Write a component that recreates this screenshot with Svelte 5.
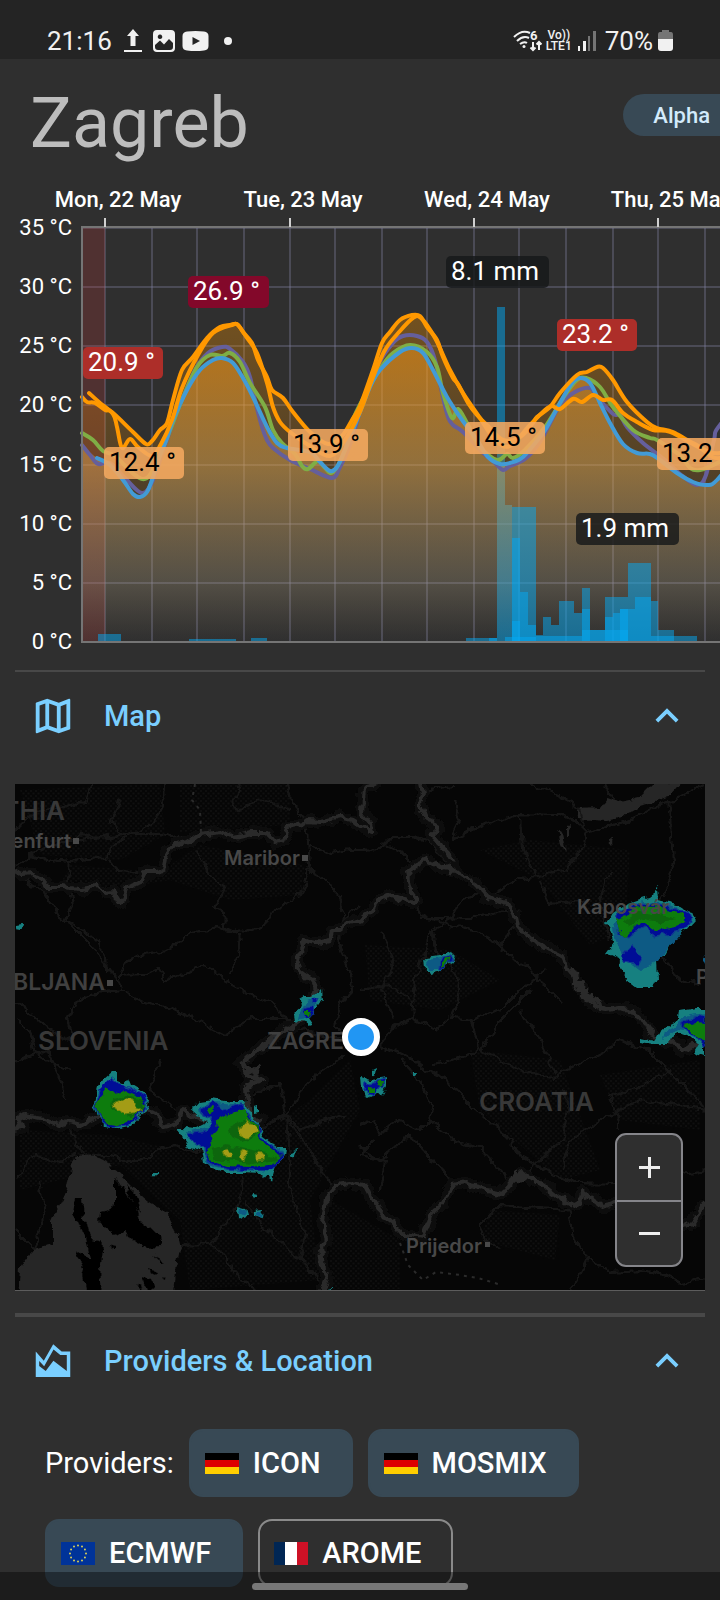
<script>
  let mapOpen = true;
  let providersOpen = true;

  let providers = [
    { name: 'ICON', flag: 'de', active: true },
    { name: 'MOSMIX', flag: 'de', active: true },
    { name: 'ECMWF', flag: 'eu', active: true },
    { name: 'AROME', flag: 'fr', active: false }
  ];

  const temps = [35, 30, 25, 20, 15, 10, 5, 0];
  const tempY = (t) => Math.round(642 - (t * 414) / 35);

  const days = [
    { x: 105, label: 'Mon, 22 May' },
    { x: 290, label: 'Tue, 23 May' },
    { x: 474, label: 'Wed, 24 May' },
    { x: 658, label: 'Thu, 25 May' }
  ];
  const gridX = [105, 152, 197, 244, 290, 335, 382, 427, 474, 519, 566, 613, 658, 705, 751];

  const upper = [[82,397],[87,402],[95,403],[105,410],[112,412],[133,432],[146,444],[152,441],[160,430],[167,423],[173,400],[182,370],[193,357],[207,338],[220,327],[230,325],[237,324],[243,332],[252,343],[258,360],[267,377],[272,390],[283,398],[293,412],[310,432],[328,444],[342,436],[352,420],[360,406],[373,370],[382,343],[390,332],[400,320],[412,315],[420,316],[427,327],[437,340],[443,357],[453,378],[458,384],[468,403],[477,415],[487,425],[503,440],[520,437],[533,423],[537,417],[550,407],[560,393],[577,375],[587,372],[597,367],[603,368],[613,380],[627,402],[647,422],[657,428],[673,432],[693,443],[720,453],[760,430]];
  const second = [[89,393],[100,403],[113,414],[117,427],[122,448],[130,439],[138,447],[152,456],[161,444],[172,420],[182,388],[198,355],[213,333],[232,325],[238,325],[247,338],[257,353],[267,383],[273,407],[280,422],[290,432],[310,446],[330,456],[345,440],[360,412],[372,380],[385,350],[400,331],[413,318],[421,318],[435,338],[450,370],[463,393],[480,418],[495,440],[510,446],[530,425],[545,410],[552,406],[560,409],[573,399],[582,402],[593,395],[603,400],[612,400],[623,413],[637,422],[653,430],[670,432],[700,448],[720,458],[760,440]];
  const blue = [[97,458],[110,465],[123,480],[133,494],[140,497],[147,492],[153,477],[160,455],[167,438],[173,420],[187,390],[200,370],[213,360],[222,358],[233,363],[243,378],[253,397],[267,427],[277,443],[287,448],[310,452],[320,462],[330,471],[337,467],[345,450],[355,425],[370,387],[380,370],[400,352],[412,348],[423,353],[433,370],[447,397],[460,417],[477,440],[488,457],[500,464],[510,463],[523,457],[540,437],[547,427],[560,403],[572,383],[580,378],[590,383],[600,403],[610,423],[623,444],[637,453],[650,454],[660,460],[677,473],[693,482],[707,485],[717,480],[740,450],[760,420]];
  const green = [[82,433],[93,440],[103,451],[115,456],[135,475],[147,478],[158,460],[167,438],[182,400],[197,367],[210,355],[222,356],[230,353],[240,362],[250,383],[265,407],[273,430],[282,443],[295,454],[302,466],[308,469],[318,461],[325,468],[333,472],[345,450],[352,422],[365,395],[382,366],[393,353],[410,345],[427,352],[437,367],[443,393],[452,418],[458,409],[467,423],[480,447],[497,460],[507,454],[513,458],[525,450],[545,427],[565,395],[577,380],[586,378],[600,387],[613,407],[633,430],[650,438],[657,440],[680,455],[700,470],[760,440]];
  const purple = [[82,445],[90,455],[98,464],[110,463],[125,478],[142,493],[153,480],[165,445],[180,405],[195,370],[208,353],[222,347],[230,349],[243,362],[250,377],[255,400],[262,427],[267,440],[273,448],[290,460],[310,469],[332,478],[340,467],[350,445],[362,405],[378,365],[393,343],[403,336],[417,336],[427,342],[435,360],[442,393],[448,417],[453,425],[463,432],[480,450],[495,463],[503,470],[510,466],[525,459],[540,442],[560,405],[575,392],[590,388],[597,397],[613,414],[620,415],[627,427],[643,443],[665,460],[680,474],[697,485],[706,475],[714,440],[720,425],[760,380]];

  // x, width, top
  const tallBars = [[497,8,307],[505,7,505]];
  const bars = [
    [98,23,634],[189,47,639],[251,16,638],[466,31,638],[489,8,638],
    [512,24,507],[512,8,538],[520,8,592],[528,8,625],[512,8,621],[505,31,637],
    [536,7,635],[543,8,617],[551,8,625],[559,15,601],[574,8,613],[582,8,588],
    [536,46,636],[582,8,609],[590,15,630],
    [605,23,597],[628,23,563],[651,7,601],[658,16,630],[674,23,636],
    [605,8,617],[613,7,613],[620,15,609],[635,16,597],[620,8,609],
    [582,46,630],[651,23,636]
  ];

  const labels = [
    { x: 188, y: 276, w: 81, text: '26.9 °', kind: 'hot' },
    { x: 83, y: 347, w: 80, text: '20.9 °', kind: 'warm' },
    { x: 557, y: 319, w: 80, text: '23.2 °', kind: 'warm' },
    { x: 104, y: 447, w: 80, text: '12.4 °', kind: 'mild' },
    { x: 288, y: 429, w: 80, text: '13.9 °', kind: 'mild' },
    { x: 465, y: 422, w: 80, text: '14.5 °', kind: 'mild' },
    { x: 657, y: 438, w: 80, text: '13.2 °', kind: 'mild' },
    { x: 446, y: 256, w: 103, text: '8.1 mm', kind: 'rain' },
    { x: 576, y: 513, w: 103, text: '1.9 mm', kind: 'rain' }
  ];

  function smooth(p) {
    let d = `M${p[0][0]} ${p[0][1]}`;
    for (let i = 0; i < p.length - 1; i++) {
      const a = p[i - 1] || p[i];
      const b = p[i];
      const c = p[i + 1];
      const e = p[i + 2] || c;
      d += `C${b[0] + (c[0] - a[0]) / 6} ${b[1] + (c[1] - a[1]) / 6} ${c[0] - (e[0] - b[0]) / 6} ${c[1] - (e[1] - b[1]) / 6} ${c[0]} ${c[1]}`;
    }
    return d;
  }

  function area(p) {
    return `${smooth(p)}V642H${p[0][0]}Z`;
  }

  const borders = [
    'M15 870L23 875L32 874L40 877L47 887L62 887L80 889L97 886L105 893L114 892L120 903L124 898L127 888L140 882L145 872L155 872L163 869L166 855L175 844L190 842L200 835L220 832L233 837L252 833L266 833L274 842L284 840L288 828L303 824L307 821L320 822L340 817L352 820L362 827L372 832L370 823L362 813L364 787L380 782',
    'M420 783L422 793L419 803L425 818L438 824L438 830L432 835L447 852L455 870L477 885L487 897L507 903L514 913L517 925L527 937L547 948L562 955L566 968L573 977L583 992L590 1002L607 1010L620 1008L633 1012L643 1020L650 1033L657 1037L670 1043L675 1042L682 1052L692 1045L706 1046',
    'M455 870L444 867L440 868L434 864L427 860L418 864L407 872L409 887L417 898L410 903L400 899L388 895L375 902L373 910L360 920L348 924L340 930L332 930L330 940L322 943L305 940L300 952L296 960L300 972L312 980L317 988L313 1000L300 1020L267 1043L240 1062L248 1076L263 1081L245 1088L247 1102L250 1115L260 1120L246 1125L213 1122L195 1118L182 1110L177 1123L163 1127L158 1115L147 1110L120 1116L97 1117L80 1125L67 1121L60 1125L43 1118L25 1115L18 1119L22 1128L15 1130',
    'M322 1292L328 1278L323 1270L321 1247L328 1240L323 1223L326 1197L337 1185L350 1183L365 1185L373 1200L385 1217L393 1222L403 1235L423 1238L432 1213L443 1203L452 1185L467 1183L487 1190L503 1193L512 1183L523 1173L532 1180L543 1185L560 1198L573 1205L580 1202L582 1192L593 1200L603 1207L620 1202L645 1220L670 1230L683 1227L693 1222L706 1203'
  ];
  const jags = [
    'M573 977L572 968L577 978L574 984L582 984L578 990L587 990L584 997L592 995L590 1003L598 999L600 1009L607 1010M510 1183L515 1173L520 1181L525 1176L533 1178L536 1184L543 1183M425 858L430 864L436 861L441 868L447 865L452 872M240 1062L252 1068L247 1075L258 1068L255 1080L263 1081'
  ];
  const roads = [
    'M15 874L45 895L60 916L72 926L92 946L106 965L115 977L122 988',
    'M66 920L84 931L98 942L107 955L108 972',
    'M117 978L128 960L145 954L168 950L190 933L218 928L240 932L262 928L275 910L300 896L310 865L306 820L293 805L288 784',
    'M117 975L145 974L160 968L165 981L180 974L205 965L230 982L244 991L275 1005L280 1014L293 1021',
    'M122 990L140 1001L165 1006L190 1016L225 1036L250 1018L285 1018L300 1030L345 1040',
    'M122 990L90 994L75 1003L67 1018L73 1040',
    'M195 850L215 880L225 886L214 908L225 912L224 927L240 935L238 955L230 975',
    'M164 784L163 805L156 820L135 833L110 836L80 840L62 842L30 855L15 865',
    'M15 830L35 812L62 807L85 802L92 784M62 842L80 835L110 838L130 834L160 834L185 838',
    'M28 855L50 860L70 862L105 858L115 845L130 836',
    'M70 862L68 880L73 905L65 920M108 858L118 870L150 872',
    'M310 868L325 882L340 895L343 915L339 940L350 975L352 990L341 1003L335 1025L350 1040L378 1046',
    'M342 920L360 905M310 845L330 853L352 850L362 850L380 849L392 838L410 838L430 842L440 855L455 875',
    'M387 845L405 855L415 865M455 800L460 820L450 840L482 825L512 815L560 816L575 820L587 831L600 828L632 820L660 804L680 798L703 785',
    'M587 831L578 855L566 870L545 875L520 878L500 890L487 896',
    'M455 786L420 790M520 815L522 850L535 875M520 780L560 795L580 810L585 830',
    'M668 800L672 835L674 862L667 890L655 910M602 784L616 800',
    'M489 894L465 897L455 910L450 920L432 930L415 980L412 1018L395 1025L380 1045',
    'M420 918L440 918L470 919L500 912L515 915M416 900L420 915L450 925L475 930L500 945L545 985L560 1000',
    'M432 930L435 950L455 970L460 990L452 1018L475 1020L500 1010L520 990L545 970',
    'M412 1018L435 1030L450 1018M380 1046L397 1052L412 1058L425 1070L445 1078L460 1095L475 1110L500 1130L522 1157L550 1172L572 1183L620 1184L706 1170',
    'M400 1058L415 1075L425 1090L433 1110L430 1120L455 1142L480 1148L496 1165L505 1180',
    'M360 1125L372 1120L380 1135L400 1120L420 1130L430 1120M375 1140L360 1155L385 1160L380 1190',
    'M470 1018L480 1050L520 1070L555 1078L575 1065L600 1055L620 1040L650 1052L668 1070L690 1092L706 1110',
    'M433 1065L470 1055L480 1045M520 1010L540 1040L555 1075M668 1070L640 1087L610 1095L620 1130',
    'M520 1175L540 1160L562 1140L568 1110L565 1090M562 1170L570 1140L600 1120L640 1100L706 1110',
    'M568 1208L575 1240L588 1258L580 1275L570 1290M588 1258L610 1272L640 1270L665 1275L680 1283L706 1278',
    'M360 1148L380 1160L410 1135L455 1185M568 1210L500 1205L480 1225L485 1240L500 1250',
    'M70 1125L75 1145L90 1155L105 1155L125 1160L145 1160L155 1150L175 1145L210 1155',
    'M15 1180L35 1155L60 1163L75 1155M15 1060L32 1055L50 1052L60 1080L65 1100',
    'M242 1175L240 1200L225 1225L210 1244L225 1255L240 1280L255 1290M245 1200L265 1230L300 1258L320 1280',
    'M180 1245L210 1244M345 1055L310 1080L287 1115L255 1130M287 1115L300 1130L325 1120L345 1115',
    'M240 1100L260 1090L280 1085L285 1115L320 1165L330 1185M287 1115L290 1160L290 1190L305 1235L300 1258',
    'M15 1230L35 1250L45 1210L40 1180M70 1070L35 1055L30 1030L15 1020M160 1060L150 1090L175 1110',
    'M540 880L550 905L590 900M520 910L500 950M380 930L395 960L380 990L395 1018M360 990L390 985L410 1000',
    'M530 990L500 1020L480 1050M610 870L600 900L610 940M650 940L680 980L700 985',
    'M120 800L110 820L120 835M240 784L233 800L238 810L260 800L290 810M15 1000L50 1030L70 1040'
  ];

  // Polygons carry a colour class, drawn from light rain to heavy
  const radar = [
    ['teal', 'M658 888L659 900L672 903L684 907L691 914L694 922L687 930L675 936L665 955L656 962L657 977L654 987L637 987L628 980L619 968L620 960L606 953L614 942L612 932L606 923L614 912L626 904L640 899L647 897Z'],
    ['mid', 'M625 908L645 901L672 905L688 914L691 922L680 933L670 946L658 962L640 971L625 960L616 942L612 924Z'],
    ['navy', 'M617 914L634 903L655 904L672 908L688 912L691 920L685 930L675 932L656 937L645 928L628 936L619 934L616 924Z'],
    ['navy', 'M632 944L636 953L641 957L637 964L625 962L621 956Z'],
    ['green', 'M615 919L627 916L634 905L655 906L673 912L686 914L686 922L675 927L655 931L645 924L634 927L625 936L618 931Z'],
    ['dark', 'M624 921L640 911L660 914L677 919L660 922L643 919L628 928Z'],
    ['teal', 'M706 1008L697 1008L679 1011L678 1020L663 1028L657 1040L640 1037L640 1042L654 1044L668 1044L677 1032L690 1037L699 1045L694 1053L706 1056Z'],
    ['mid', 'M706 1012L690 1014L680 1022L666 1031L664 1040L677 1028L690 1030L706 1046Z'],
    ['navy', 'M706 1014L693 1016L682 1024L690 1034L700 1039L706 1047Z'],
    ['green', 'M706 1023L695 1022L685 1025L694 1035L706 1040Z'],
    ['mid', 'M706 953L703 957L706 964Z'],
    ['teal', 'M424 957L440 955L451 951L455 955L453 963L440 970L430 973L425 968Z'],
    ['mid', 'M427 959L443 957L452 954L453 961L438 969L428 969Z'],
    ['navy', 'M439 961L451 955L452 961L443 968L438 968Z'],
    ['green', 'M442 962L450 957L448 964L441 967Z'],
    ['teal', 'M321 989L322 1000L315 1010L309 1018L313 1024L311 1028L304 1022L295 1020L294 1012L301 1006L300 999L305 996L314 996Z'],
    ['mid', 'M318 996L317 1005L309 1012L306 1018L299 1019L301 1010L307 1000Z'],
    ['navy', 'M314 997L319 999L317 1004L312 1003ZM304 1009L312 1008L314 1014L306 1018Z'],
    ['green', 'M306 1011L311 1011L310 1015L306 1015Z'],
    ['teal', 'M16 925L22 924L24 927L20 930L15 929Z'],
    ['teal', 'M112 1072L117 1072L117 1081L122 1083L127 1077L130 1084L143 1092L149 1101L146 1113L137 1119L131 1127L116 1130L105 1128L98 1115L93 1103L97 1087L103 1080Z'],
    ['navy', 'M111 1078L117 1083L129 1087L143 1094L147 1103L144 1112L135 1119L128 1126L110 1129L102 1122L95 1104L99 1090Z'],
    ['green', 'M107 1088L113 1094L127 1090L140 1096L146 1104L141 1112L132 1119L120 1127L108 1126L100 1115L96 1104L101 1095Z'],
    ['dark', 'M113 1100L128 1095L143 1099L144 1109L132 1117L120 1112L112 1108Z'],
    ['yellow', 'M114 1104L123 1101L127 1098L133 1099L135 1106L142 1109L141 1113L133 1113L126 1114L116 1110Z'],
    ['teal', 'M175 1127L183 1127L195 1128L207 1122L195 1117L194 1108L200 1101L213 1099L230 1102L244 1102L250 1112L258 1125L264 1137L278 1147L285 1147L284 1157L274 1166L270 1179L262 1174L244 1173L225 1173L212 1169L205 1162L203 1151L189 1147L182 1135Z'],
    ['mid', 'M198 1108L208 1102L230 1105L243 1105L256 1125L262 1139L280 1149L282 1157L268 1171L226 1170L208 1165L205 1150L193 1144L186 1132L208 1127L212 1120L199 1116Z'],
    ['navy', 'M200 1107L213 1102L222 1110L243 1105L250 1118L258 1127L261 1138L276 1149L283 1158L268 1172L226 1169L209 1163L206 1149L190 1141L187 1134L208 1131L213 1118L201 1116Z'],
    ['green', 'M205 1109L211 1107L215 1111L208 1114ZM216 1121L232 1112L245 1108L248 1118L256 1125L260 1140L272 1149L281 1157L270 1165L250 1167L226 1166L212 1161L207 1153L211 1146L210 1137L217 1130Z'],
    ['dark', 'M228 1130L246 1120L257 1128L256 1137L240 1141L230 1137ZM211 1149L226 1145L246 1149L275 1155L278 1159L250 1163L216 1159Z'],
    ['yellow', 'M240 1130L247 1120L252 1126L257 1131L250 1137L241 1137ZM222 1152L228 1149L233 1152L231 1157L224 1157ZM241 1151L247 1152L244 1160L240 1157ZM255 1154L263 1155L267 1159L257 1160Z'],
    ['teal', 'M254 1108L259 1107L259 1112L254 1113ZM291 1151L297 1149L296 1156L291 1157ZM153 1173L158 1173L158 1176L153 1175ZM254 1192L259 1193L257 1196L253 1195ZM238 1206L245 1208L247 1215L244 1219L239 1217ZM254 1211L261 1210L260 1217L254 1215Z'],
    ['mid', 'M241 1208L245 1210L244 1216L240 1214ZM256 1212L260 1212L259 1216L256 1215Z'],
    ['teal', 'M362 1077L371 1080L386 1078L387 1085L382 1095L376 1092L366 1097L363 1089ZM372 1070L376 1068L375 1073L372 1075ZM414 1072L418 1072L417 1076L414 1076ZM327 1288L332 1287L332 1291L327 1291Z'],
    ['navy', 'M366 1084L384 1079L385 1087L376 1089L371 1095L365 1091Z'],
    ['green', 'M368 1086L373 1087L373 1092L368 1092ZM379 1081L384 1081L383 1087L377 1086Z']
  ];

  const hills = [
    'M20 790L160 784L165 835L120 860L40 855Z',
    'M70 865L160 872L200 845L305 865L300 895L230 900L170 880L110 890L60 885Z',
    'M180 784L290 784L290 825L180 832Z',
    'M480 850L530 840L630 850L625 930L590 945L540 880Z',
    'M20 1130L110 1135L220 1160L310 1100L350 1060L360 1110L310 1200L320 1280L190 1290L180 1220L120 1165L20 1190Z',
    'M365 945L450 950L500 980L440 1010L370 1000Z',
    'M470 1050L560 1060L600 1170L560 1180L480 1110Z',
    'M330 1200L400 1240L400 1289L330 1289Z',
    'M600 1075L700 1060L700 1130L620 1120Z',
    'M490 1210L560 1215L555 1260L480 1240Z'
  ];

  const stars = Array.from({ length: 12 }, (_, i) => {
    const a = (i * Math.PI) / 6;
    return [17 + 8 * Math.sin(a), 11.5 - 8 * Math.cos(a)];
  });

  function toggle(provider) {
    provider.active = !provider.active;
    providers = providers;
  }
</script>

<div class="status">
  <span class="clock">21:16</span>
  <svg class="status__upload" viewBox="0 0 18 24"><path d="M9 0L15 7H11.500V17H6.500V7H3ZM0 21H18V23H0Z" /></svg>
  <svg class="status__image" viewBox="0 0 22 22">
    <path fill-rule="evenodd" d="M4 0H18Q22 0 22 4V18Q22 22 18 22H4Q0 22 0 18V4Q0 0 4 0ZM2 15L7 10.500L11 14.500L16 9L20 13V17Q20 20 17 20H5Q2 20 2 17ZM7 4.500A2.300 2.300 0 1 0 7.010 4.500Z" />
  </svg>
  <svg class="status__video" viewBox="0 0 27 20">
    <path fill-rule="evenodd" d="M5 .5Q13.500-.5 22 .5Q26.500 1 26.500 5V15Q26.500 19 22 19.500Q13.500 20.500 5 19.500Q.5 19 .5 15V5Q.5 1 5 .5ZM10.500 6V14L18 10Z" />
  </svg>
  <span class="status__dot"></span>
  <svg class="status__wifi" viewBox="0 0 30 22">
    <g fill="none" stroke="#f1f1f1" stroke-width="2">
      <path d="M1 7Q9-1 17 3M4 11Q10 5 16 8M7 14Q11 11 14 13" />
      <path d="M20 12V20M17.500 17.500L20 20L22.500 17.500M26 20V12M23.500 14.500L26 12L28.500 14.500" />
    </g>
    <circle cx="11" cy="16.500" r="1.500" />
    <text x="17" y="10" font-size="13" font-weight="700">6</text>
  </svg>
  <span class="status__lte"><b>Vo))</b><b>LTE1</b></span>
  <svg class="status__signal" viewBox="0 0 20 20">
    <path d="M1 15H3V20H1ZM6 10H9V20H6Z" />
    <path opacity=".4" d="M11 5H13V20H11ZM16 0H19V20H16Z" />
  </svg>
  <span class="clock">70%</span>
  <svg class="status__battery" viewBox="0 0 15 22">
    <path opacity=".4" d="M4 0H11V2H13Q15 2 15 5V9H0V5Q0 2 2 2H4Z" />
    <path d="M0 9H15V18Q15 21 12 21H3Q0 21 0 18Z" />
  </svg>
</div>

<header>
  <h1>Zagreb</h1>
  <button class="alpha">Alpha</button>
</header>

<div class="chart">
  <svg width="760" height="476" viewBox="0 184 760 476" role="img" aria-label="Temperature and rain forecast">
    <defs>
      <linearGradient id="outer" gradientUnits="userSpaceOnUse" x1="0" y1="320" x2="0" y2="642">
        <stop offset="0" stop-color="#ff9800" stop-opacity=".32" />
        <stop offset="1" stop-color="#ff9800" stop-opacity="0" />
      </linearGradient>
      <linearGradient id="inner" gradientUnits="userSpaceOnUse" x1="0" y1="345" x2="0" y2="642">
        <stop offset="0" stop-color="#ff9a14" stop-opacity=".5" />
        <stop offset=".4" stop-color="#dba655" stop-opacity=".46" />
        <stop offset=".8" stop-color="#a2a194" stop-opacity=".24" />
        <stop offset="1" stop-color="#888" stop-opacity="0" />
      </linearGradient>
    </defs>

    {#each gridX as x}
      <path class="grid" d="M{x} 228V642" />
    {/each}
    {#each temps as t}
      <path class="grid" d="M82 {tempY(t)}H760" />
      <text class="axis" x="72" y={tempY(t) + 7} text-anchor="end">{t} °C</text>
    {/each}
    <rect class="past" x="83" y="228" width="22" height="414" />

    {#each tallBars as [x, w, top]}
      <rect class="bar" {x} y={top} width={w} height={641 - top} />
    {/each}
    <path d={area(upper)} fill="url(#outer)" />
    <path d={area([[82, 446], ...blue])} fill="url(#inner)" />

    <path class="line" d={smooth(purple)} stroke="#655f9c" />
    <path class="line" d={smooth(green)} stroke="#7fae45" />
    <path class="line" d={smooth(blue)} stroke="#429bd6" />
    <path class="line" d={smooth(upper)} stroke="#ff9800" />
    <path class="line" d={smooth(second)} stroke="#ff9800" />

    {#each bars as [x, w, top]}
      <rect class="bar" {x} y={top} width={w} height={642 - top} />
    {/each}
    <path class="frame" d="M760 227H82V642H760" />

    {#each days as day}
      <path class="tick" d="M{day.x} 218V227" />
      <text class="day" x={day.x + 13} y="207" text-anchor="middle">{day.label}</text>
    {/each}

    {#each labels as l}
      <g class="label {l.kind}">
        <rect x={l.x} y={l.y} width={l.w} height="32" rx="5" />
        <text x={l.x + 5} y={l.y + 24}>{l.text}</text>
      </g>
    {/each}
  </svg>
</div>

<section>
  <button class="toggle" aria-expanded={mapOpen} on:click={() => (mapOpen = !mapOpen)}>
    <svg viewBox="0 0 24 24">
      <path d="M20.5,3L20.34,3.03L15,5.1L9,3L3.36,4.9C3.15,4.97 3,5.15 3,5.38V20.5A0.5,0.5 0 0,0 3.5,21L3.66,20.97L9,18.9L15,21L20.64,19.1C20.85,19.03 21,18.85 21,18.62V3.5A0.5,0.5 0 0,0 20.5,3M10,5.47L14,6.87V18.53L10,17.13V5.47M5,6.46L8,5.45V17.15L5,18.31V6.46M19,17.54L16,18.55V6.86L19,5.7V17.54Z" />
    </svg>
    <span>Map</span>
    <svg class:closed={!mapOpen} viewBox="0 0 24 24"><path d="M7.41,15.41L12,10.83L16.59,15.41L18,14L12,8L6,14L7.41,15.41Z" /></svg>
  </button>

  {#if mapOpen}
    <div class="map">
      <svg class="map__canvas" viewBox="15 784 690 506" preserveAspectRatio="xMidYMid slice">
        <defs>
          <pattern id="dots" width="5" height="5" patternUnits="userSpaceOnUse">
            <circle cx="1" cy="1" r="1" fill="#101010" />
            <circle cx="3.500" cy="3.500" r="1" fill="#101010" />
          </pattern>
          <filter id="rough" filterUnits="userSpaceOnUse" x="0" y="770" width="720" height="540">
            <feTurbulence type="fractalNoise" baseFrequency=".09" numOctaves="3" seed="4" />
            <feDisplacementMap in="SourceGraphic" scale="9" xChannelSelector="R" yChannelSelector="G" />
          </filter>
        </defs>
        {#each hills as d}
          <path {d} fill="url(#dots)" />
        {/each}
        <g filter="url(#rough)">
          <g class="water">
            <path d="M577 808L600 807L607 798L620 802L640 797L653 784L685 778L667 798L640 807L623 817L607 821L578 819ZM557 830L562 834L566 851L560 844ZM567 827L571 825L570 834L567 837ZM608 841L612 840L611 845Z" />
            <path d="M78 1155L90 1154L103 1161L118 1172L133 1187L150 1202L167 1212L175 1227L181 1247L177 1263L173 1300L18 1300L20 1267L33 1250L52 1245L52 1222L61 1203L67 1190L72 1163Z" />
          </g>
          <g class="islands">
            <path d="M75 1198L83 1198L85 1217L92 1240L103 1243L100 1263L102 1300L87 1300L84 1272L75 1257L78 1250L90 1260L88 1247L82 1230L72 1213Z" />
            <path d="M115 1178L121 1186L128 1193L138 1210L140 1220L150 1227L160 1237L162 1247L147 1248L130 1237L127 1230L118 1235L107 1230L99 1222L100 1213L110 1210L115 1203Z" />
            <path d="M125 1183L137 1195L141 1213L135 1206L130 1195ZM108 1245L117 1247L115 1250ZM153 1255L165 1263L161 1264ZM150 1268L156 1270L153 1275ZM161 1276L166 1278L163 1280ZM142 1277L152 1281L155 1288L147 1290ZM136 1287L141 1285L143 1290Z" />
          </g>
          {#each roads as d}
            <path class="road" {d} />
          {/each}
          {#each borders as d}
            <path class="halo" {d} />
            <path class="border" {d} />
          {/each}
          {#each jags as d}
            <path class="border" {d} />
          {/each}
        </g>
        <path class="dashed" d="M195 784L192 800L200 810L201 832M400 1243L408 1265L423 1280L436 1272L460 1275L478 1278L498 1284" />

        <g filter="url(#rough)">
          {#each radar as [tone, d]}
            <path class="radar {tone}" {d} />
          {/each}
        </g>

        <g class="places">
          <text class="country" x="65" y="820" text-anchor="end">CARINTHIA</text>
          <text x="71" y="848" text-anchor="end">Klagenfurt</text>
          <text x="224" y="865">Maribor</text>
          <text class="city" x="105" y="990" text-anchor="end">LJUBLJANA</text>
          <text class="country" x="38" y="1050">SLOVENIA</text>
          <text class="city" x="267" y="1049">ZAGREB</text>
          <text class="country" x="479" y="1111">CROATIA</text>
          <text x="577" y="914">Kaposvár</text>
          <text x="696" y="984">Pécs</text>
          <text x="406" y="1253">Prijedor</text>
          <path d="M73 838H79V844H73ZM302 855H308V861H302ZM107 980H113V986H107ZM485 1242H490V1247H485Z" />
        </g>
        <circle cx="361" cy="1037" r="16" fill="#2196f3" stroke="#fff" stroke-width="6" />
      </svg>
      <div class="zoom">
        <button aria-label="Zoom in"><svg viewBox="0 0 21 21"><path d="M0 9H9V0H12V9H21V12H12V21H9V12H0Z" /></svg></button>
        <button aria-label="Zoom out"><svg viewBox="0 0 21 21"><path d="M0 9H21V12H0Z" /></svg></button>
      </div>
    </div>
  {/if}
</section>

<section class="thick">
  <button class="toggle" aria-expanded={providersOpen} on:click={() => (providersOpen = !providersOpen)}>
    <svg viewBox="0 0 24 24">
      <path fill-rule="evenodd" d="M3 7L7.200 11.900L12.100 3.200L16.500 7H21V20.300H3ZM4.800 12V14.600L8.200 17.200L12.200 11.900L19.200 17.200V8.900H15.800L12.300 6L7.400 14.800Z" />
    </svg>
    <span>Providers &amp; Location</span>
    <svg class:closed={!providersOpen} viewBox="0 0 24 24"><path d="M7.41,15.41L12,10.83L16.59,15.41L18,14L12,8L6,14L7.41,15.41Z" /></svg>
  </button>

  {#if providersOpen}
    <div class="providers">
      <span>Providers:</span>
      {#each providers as p}
        <button class="chip" class:active={p.active} aria-pressed={p.active} on:click={() => toggle(p)}>
          {#if p.flag === 'de'}
            <svg viewBox="0 0 34 21"><path fill="#000" d="M0 0H34V7H0Z" /><path fill="#d00" d="M0 7H34V14H0Z" /><path fill="#ffce00" d="M0 14H34V21H0Z" /></svg>
          {:else if p.flag === 'eu'}
            <svg viewBox="0 0 34 23">
              <path fill="#039" d="M0 0H34V23H0Z" />
              {#each stars as [cx, cy]}
                <circle {cx} {cy} r="1" fill="#d8cf58" />
              {/each}
            </svg>
          {:else}
            <svg viewBox="0 0 34 23"><path fill="#002654" d="M0 0H11V23H0Z" /><path fill="#fff" d="M11 0H23V23H11Z" /><path fill="#ce1126" d="M23 0H34V23H23Z" /></svg>
          {/if}
          {p.name}
        </button>
      {/each}
    </div>
  {/if}
</section>

<div class="navbar"><span></span></div>

<style>
:global(body) {
  background: #2f2f2f;
  color: #fff;
  font-family: Roboto, "Liberation Sans", sans-serif;
  overflow-x: hidden;
}

:global(#app) {
  height: 100vh;
  overflow: hidden;
}

button {
  font: inherit;
  color: inherit;
  border: 0;
  background: none;
  cursor: pointer;
}

.status {
  display: flex;
  align-items: center;
  height: 37px;
  padding: 22px 47px 0 47px;
  background: #242424;
  color: #f1f1f1;
}

.status svg {
  fill: #f1f1f1;
  flex: none;
}

.clock {
  font-size: 26px;
}

.status__upload {
  width: 18px;
  height: 24px;
  margin-left: 12px;
}

.status__image {
  width: 22px;
  height: 22px;
  margin-left: 11px;
}

.status__video {
  width: 27px;
  height: 20px;
  margin-left: 7px;
}

.status__dot {
  width: 8px;
  height: 8px;
  border-radius: 50%;
  background: #f1f1f1;
  margin-left: 15px;
}

.status__wifi {
  width: 30px;
  height: 22px;
  margin-left: auto;
}

.status__lte {
  display: flex;
  flex-direction: column;
  align-items: center;
  font-size: 12px;
  line-height: 11px;
  margin: 0 5px 0 3px;
}

.status__lte b {
  font-weight: 500;
}

.status__signal {
  width: 20px;
  height: 20px;
  margin-right: 8px;
}

.status__battery {
  width: 15px;
  height: 22px;
  margin-left: 5px;
}

header {
  display: flex;
  justify-content: space-between;
  align-items: flex-start;
  padding: 35px 0 32px 30px;
}

h1 {
  margin: 0;
  font-size: 70px;
  line-height: 58px;
  font-weight: 400;
  color: #bdbdbd;
}

/* the pill runs past the right edge of the screen */
.alpha {
  flex: none;
  height: 42px;
  padding: 0 30px;
  margin-right: -20px;
  border-radius: 21px;
  background: #384955;
  color: #d3ebfb;
  font-size: 22px;
  font-weight: 500;
}

.chart {
  overflow: hidden;
}

.chart svg {
  display: block;
}

.grid {
  stroke: #8080a0;
  stroke-opacity: .35;
  stroke-width: 2;
}

.frame {
  fill: none;
  stroke: #757575;
  stroke-width: 2;
}

.tick {
  stroke: #d0d0d0;
  stroke-width: 2;
}

.axis {
  fill: #fff;
  font-size: 22px;
}

.day {
  fill: #fff;
  font-size: 22px;
  font-weight: 500;
}

.past {
  fill: #c83c3c;
  fill-opacity: .22;
}

.bar {
  fill: #03a9f4;
  fill-opacity: .5;
}

.line {
  fill: none;
  stroke-width: 4;
  stroke-linecap: round;
  stroke-linejoin: round;
}

.label text {
  fill: #fff;
  font-size: 26px;
}

.hot rect {
  fill: #83082a;
}

.warm rect {
  fill: #ad2e29;
}

.mild rect {
  fill: #f4a860;
  fill-opacity: .88;
}

.mild text {
  fill: #000;
}

.rain rect {
  fill: #16191a;
  fill-opacity: .82;
}

section {
  margin: 10px 15px 0;
  border-top: 2px solid #484848;
}

.thick {
  margin-top: 22px;
  border-top-width: 4px;
}

.toggle {
  display: flex;
  align-items: center;
  width: 100%;
  height: 88px;
  padding: 0 15px;
  color: #7acfff;
  font-size: 29px;
  font-weight: 500;
  text-align: left;
}

.toggle svg {
  flex: none;
  width: 46px;
  height: 46px;
  fill: #7acfff;
}

.toggle span {
  flex: 1;
  margin-left: 28px;
}

.closed {
  transform: rotate(180deg);
}

.map {
  position: relative;
  margin-top: 24px;
  height: 506px;
  background: #060606;
  border-bottom: 1px solid #5c5c5c;
}

.map__canvas {
  display: block;
  width: 100%;
  height: 100%;
}

.water {
  fill: #262626;
}

.islands {
  fill: #060606;
}

.road {
  fill: none;
  stroke: #181818;
  stroke-width: 2;
  stroke-linejoin: round;
}

.halo {
  fill: none;
  stroke: #0e0e0e;
  stroke-width: 12;
  stroke-linejoin: round;
}

.border {
  fill: none;
  stroke: #2c2c2c;
  stroke-width: 4;
  stroke-linejoin: round;
}

.dashed {
  fill: none;
  stroke: #2b2b2b;
  stroke-width: 2;
  stroke-dasharray: 3 5;
}

.places {
  fill: #484848;
  font-family: Inter, "Open Sans", sans-serif;
  font-size: 20px;
  font-weight: 600;
}

.country {
  fill: #383838;
  font-size: 26px;
}

.city {
  fill: #404040;
  font-size: 23px;
}

.radar {
  stroke-width: 1;
  stroke-linejoin: round;
}

.teal {
  fill: #148080;
}

.mid {
  fill: #0e5a84;
}

.navy {
  fill: #060c96;
  stroke: #0a3c90;
}

.green {
  fill: #0b7c0c;
}

.dark {
  fill: #086608;
}

.yellow {
  fill: #a39c12;
  stroke: #4f7a0c;
}

.zoom {
  position: absolute;
  right: 22px;
  bottom: 23px;
  width: 64px;
  border: 2px solid #85858a;
  border-radius: 11px;
  overflow: hidden;
  background: #2f2f2f;
}

.zoom button {
  display: flex;
  align-items: center;
  justify-content: center;
  width: 100%;
  height: 65px;
  padding: 0;
}

.zoom button + button {
  border-top: 2px solid #85858a;
}

.zoom svg {
  width: 21px;
  height: 21px;
  fill: #eee;
}

.providers {
  display: flex;
  flex-wrap: wrap;
  align-items: center;
  gap: 22px 15px;
  padding: 24px 30px;
  font-size: 29px;
}

.chip {
  display: flex;
  align-items: center;
  gap: 14px;
  height: 68px;
  padding: 0 30px 0 14px;
  border: 2px solid #8a8a8a;
  border-radius: 14px;
  font-weight: 500;
}

.chip.active {
  background: #384955;
  border-color: #384955;
}

.chip svg {
  width: 34px;
}

.navbar {
  position: fixed;
  left: 0;
  right: 0;
  bottom: 0;
  height: 28px;
  background: rgba(0, 0, 0, .4);
}

.navbar span {
  display: block;
  width: 30%;
  height: 7px;
  margin: 11px auto 0;
  border-radius: 4px;
  background: #777;
}
</style>
